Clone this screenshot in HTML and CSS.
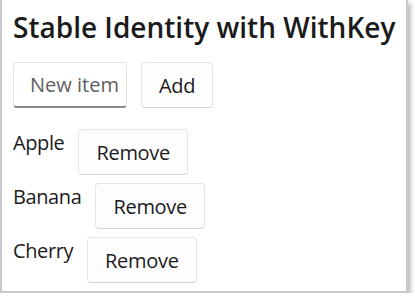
FILE: index.html
```html
<!DOCTYPE html>
<html lang="en">

<head>
    <meta charset="UTF-8">
    <title>Stable Identity with WithKey</title>
    <link rel="stylesheet" href="styles.css">
</head>

<body>
    <div class="window">
        <h1 class="title">Stable Identity with WithKey</h1>

        <div class="add-row">
            <input class="item-input" type="text" placeholder="New item">
            <button class="btn">Add</button>
        </div>

        <div class="item-list">
            <div class="item-row">
                <span class="item-name">Apple</span>
                <button class="btn">Remove</button>
            </div>
            <div class="item-row">
                <span class="item-name">Banana</span>
                <button class="btn">Remove</button>
            </div>
            <div class="item-row">
                <span class="item-name">Cherry</span>
                <button class="btn">Remove</button>
            </div>
        </div>
    </div>
</body>

</html>
```

FILE: styles.css
```css
* {
    margin: 0;
    padding: 0;
    box-sizing: border-box;
    font-family: 'Open Sans', sans-serif;
}

body {
    background: #fff;
}

.window {
    width: 408px;
    height: 293px;
    background: #fff;
    border: 2px solid #c6c9d0;
    border-top: none;
    box-shadow: 3px 3px 4px rgba(0, 0, 0, 0.25);
    padding: 8px 0 0 11px;
}

.title {
    font-size: 28px;
    font-weight: 600;
    color: #1b1b1b;
    line-height: 38px;
}

.add-row {
    display: flex;
    gap: 14px;
    margin-top: 16px;
}

.item-input {
    width: 114px;
    height: 46px;
    border: 1px solid #e3e3e3;
    border-bottom: 2px solid #8a8a8a;
    border-radius: 4px;
    padding: 0 0 0 16px;
    font-size: 20px;
    color: #1b1b1b;
    outline: none;
}

.item-input::placeholder {
    color: #5f5f5f;
}

.btn {
    height: 46px;
    padding: 0 17px;
    background: #fdfdfd;
    border: 1px solid #e5e5e5;
    border-bottom-color: #d2d2d2;
    border-radius: 4px;
    font-size: 20px;
    letter-spacing: -0.3px;
    color: #1b1b1b;
}

.item-list {
    display: flex;
    flex-direction: column;
    gap: 8px;
    margin-top: 21px;
}

.item-row {
    display: flex;
    align-items: flex-start;
    gap: 14px;
}

.item-name {
    font-size: 20px;
    letter-spacing: -0.4px;
    color: #1b1b1b;
    line-height: 28px;
}
```
